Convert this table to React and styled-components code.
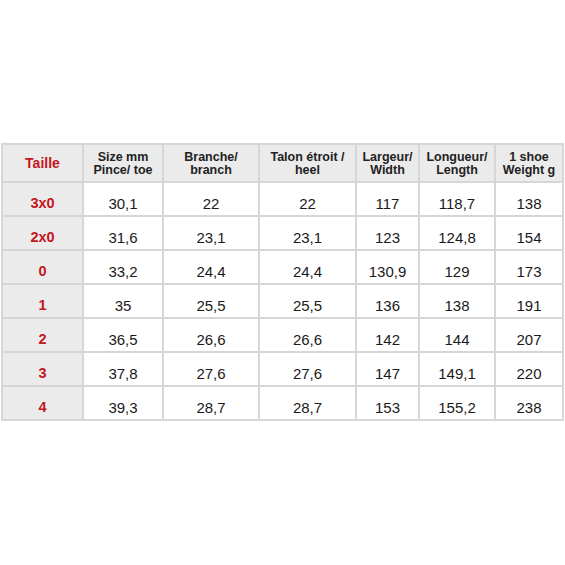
import React from "react";
import styled, { createGlobalStyle } from "styled-components";

const Global = createGlobalStyle`
  html, body { margin: 0; padding: 0; background: #fff; }
  body { font-family: "Liberation Sans", Arial, Helvetica, sans-serif; }
`;

const Page = styled.div`
  width: 565px;
  height: 565px;
  padding-top: 143px;
  padding-left: 1px;
  box-sizing: border-box;
`;

const Table = styled.div`
  display: grid;
  grid-template-columns: 79px 78px 94px 95px 61px 74px 66px;
  grid-template-rows: 36px repeat(7, 32px);
  gap: 2px;
  padding: 2px;
  width: max-content;
  background: #d6d6d6;
`;

const Cell = styled.div`
  display: flex;
  justify-content: center;
  align-items: ${(p) => (p.$head ? "center" : "flex-end")};
  padding-bottom: ${(p) => (p.$head ? "0" : "3px")};
  box-sizing: border-box;
  text-align: center;
  background: ${(p) => (p.$shade ? "#ebebeb" : "#ffffff")};
  color: ${(p) => (p.$red ? "#c5161d" : p.$head ? "#222" : "#1a1a1a")};
  font-weight: ${(p) => (p.$bold ? 700 : 400)};
  font-size: ${(p) => p.$size || 15}px;
  line-height: ${(p) => (p.$head ? "12.5px" : "17px")};
  padding-top: ${(p) => (p.$head ? "1px" : "0")};
`;

const headers = [
  "Size mm\nPince/ toe",
  "Branche/\nbranch",
  "Talon étroit /\nheel",
  "Largeur/\nWidth",
  "Longueur/\nLength",
  "1 shoe\nWeight g",
];

const rows = [
  ["3x0", "30,1", "22", "22", "117", "118,7", "138"],
  ["2x0", "31,6", "23,1", "23,1", "123", "124,8", "154"],
  ["0", "33,2", "24,4", "24,4", "130,9", "129", "173"],
  ["1", "35", "25,5", "25,5", "136", "138", "191"],
  ["2", "36,5", "26,6", "26,6", "142", "144", "207"],
  ["3", "37,8", "27,6", "27,6", "147", "149,1", "220"],
  ["4", "39,3", "28,7", "28,7", "153", "155,2", "238"],
];

function Lines({ text }) {
  const parts = text.split("\n");
  return (
    <span>
      {parts.map((t, i) => (
        <React.Fragment key={i}>
          {t}
          {i < parts.length - 1 && <br />}
        </React.Fragment>
      ))}
    </span>
  );
}

export default function App() {
  return (
    <>
      <Global />
      <Page>
        <Table>
          <Cell $head $shade $red $bold $size={14}>
            Taille
          </Cell>
          {headers.map((h) => (
            <Cell key={h} $head $shade $bold $size={12.5}>
              <Lines text={h} />
            </Cell>
          ))}
          {rows.map((r) =>
            r.map((v, i) =>
              i === 0 ? (
                <Cell key={r[0] + i} $shade $red $bold $size={14.5}>
                  {v}
                </Cell>
              ) : (
                <Cell key={r[0] + i}>{v}</Cell>
              )
            )
          )}
        </Table>
      </Page>
    </>
  );
}
